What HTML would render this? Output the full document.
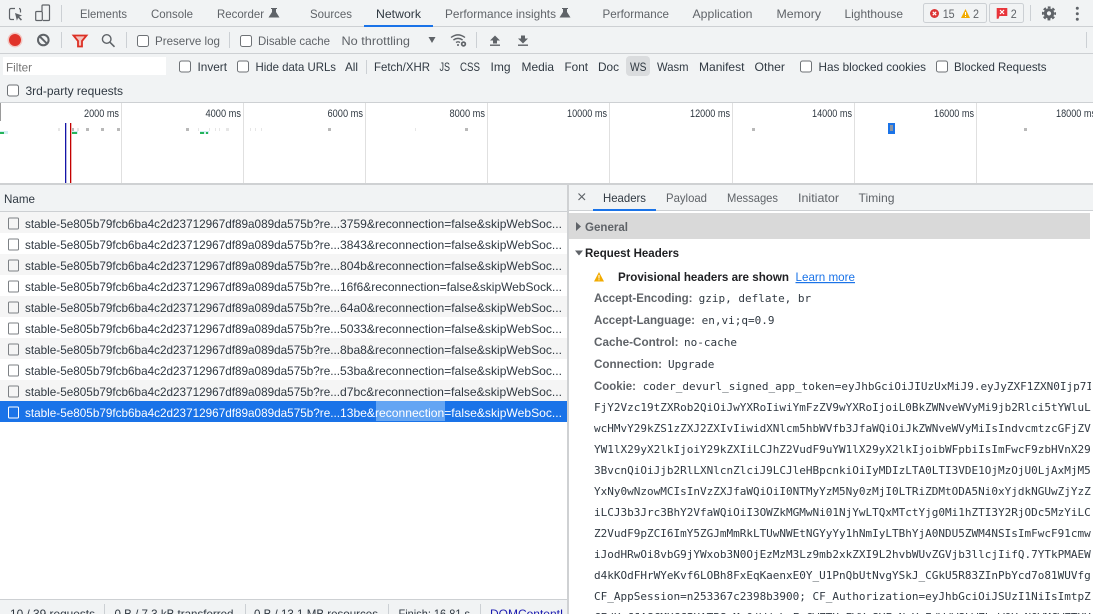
<!DOCTYPE html>
<html><head><meta charset="utf-8"><style>
html,body{margin:0;padding:0;background:#f1f3f4;width:1093px;height:614px;overflow:hidden}
svg{display:block;font-family:"Liberation Sans",sans-serif;font-size:12px}
.t{fill:#5f6368}.d{fill:#303942}.b{font-weight:bold}
.m{font-family:"DejaVu Sans Mono",monospace;font-size:11px;fill:#303942}
.l{font-size:11px;fill:#303942}
.cb{fill:#fff;stroke:#6e7276;stroke-width:1}
.sep{stroke:#ccd0d4;stroke-width:1}
.g{stroke:#e0e0e0;stroke-width:1}
.k{fill:#5f6368;font-weight:bold}
.r{fill:#303942}
.w{fill:#fff}
</style></head><body>
<svg width="1093" height="614" viewBox="0 0 1093 614" xmlns="http://www.w3.org/2000/svg">
<defs><clipPath id="cc"><rect x="569" y="240" width="522" height="374"/></clipPath><clipPath id="sc"><rect x="0" y="600" width="567" height="14"/></clipPath></defs>
<rect width="1093" height="614" fill="#f1f3f4"/>
<!-- main tab bar -->
<rect x="0" y="26" width="1093" height="1" fill="#cdd0d3"/>
<rect x="364" y="25" width="69" height="2" fill="#1a73e8"/>
<path d="M15 8.500h-4a1.500 1.500 0 0 0-1.500 1.500v8a1.500 1.500 0 0 0 1.500 1.500h3M20.500 12.500V10a1.500 1.500 0 0 0-1.500-1.500" fill="none" stroke="#5f6368" stroke-width="1.200"/>
<path d="M15 13l7 2.500-2.800 1.200 2.800 2.800-1.100 1.100-2.800-2.800-1.200 2.800z" fill="#5f6368"/>
<path d="M42 11V6a1 1 0 0 1 1-1h5.500a1 1 0 0 1 1 1v13.500a1 1 0 0 1-1 1H43" fill="none" stroke="#5f6368" stroke-width="1.200"/>
<rect x="35.700" y="11.500" width="6.600" height="9" rx="1" fill="#f1f3f4" stroke="#5f6368" stroke-width="1.200"/>
<line class="sep" x1="61.500" y1="5" x2="61.500" y2="22"/>
<text class="t" x="80" y="18" textLength="47" lengthAdjust="spacingAndGlyphs">Elements</text>
<text class="t" x="151" y="18" textLength="42" lengthAdjust="spacingAndGlyphs">Console</text>
<text class="t" x="217" y="18" textLength="47" lengthAdjust="spacingAndGlyphs">Recorder</text>
<path d="M271 8h6v1h-1v3l3.500 5.500h-11L272 12V9h-1z" fill="#5f6368"/>
<text class="t" x="310" y="18" textLength="42" lengthAdjust="spacingAndGlyphs">Sources</text>
<text class="d" x="376" y="18" textLength="45" lengthAdjust="spacingAndGlyphs">Network</text>
<text class="t" x="445" y="18" textLength="111" lengthAdjust="spacingAndGlyphs">Performance insights</text>
<path d="M562 8h6v1h-1v3l3.500 5.500h-11L563 12V9h-1z" fill="#5f6368"/>
<text class="t" x="602.500" y="18" textLength="66.500" lengthAdjust="spacingAndGlyphs">Performance</text>
<text class="t" x="692.500" y="18" textLength="60" lengthAdjust="spacingAndGlyphs">Application</text>
<text class="t" x="776.500" y="18" textLength="44.500" lengthAdjust="spacingAndGlyphs">Memory</text>
<text class="t" x="844.500" y="18" textLength="58.500" lengthAdjust="spacingAndGlyphs">Lighthouse</text>
<rect x="923.500" y="3.500" width="63" height="19" rx="2" fill="#f1f3f4" stroke="#ccd0d4"/>
<circle cx="934.500" cy="13.500" r="4.500" fill="#dc3535"/><path d="M932.800 11.800l3.400 3.400m0-3.400l-3.400 3.400" stroke="#fff" stroke-width="1.200"/>
<text class="t" x="942.700" y="18" textLength="12" lengthAdjust="spacingAndGlyphs">15</text>
<path d="M961 18l4.500-9 4.500 9z" fill="#f2ab00"/><rect x="965" y="12" width="1" height="3" fill="#fff"/><rect x="965" y="16" width="1" height="1" fill="#fff"/>
<text class="t" x="973" y="18" textLength="6" lengthAdjust="spacingAndGlyphs">2</text>
<rect x="989.500" y="3.500" width="34" height="19" rx="2" fill="#f1f3f4" stroke="#ccd0d4"/>
<path d="M996.700 8h10.600v8h-7.800l-1 2.700h-1.800z" fill="#e8353b"/><path d="M1000 10l4 4m0-4l-4 4" stroke="#fff" stroke-width="1.200"/>
<text class="t" x="1010.700" y="18" textLength="6" lengthAdjust="spacingAndGlyphs">2</text>
<line class="sep" x1="1030.500" y1="5" x2="1030.500" y2="21"/>
<circle cx="1049" cy="13.400" r="5.200" fill="#5f6368"/>
<circle cx="1049" cy="13.400" r="6.100" fill="none" stroke="#5f6368" stroke-width="1.900" stroke-dasharray="2.800 1.990" stroke-dashoffset="1.400"/>
<circle cx="1049" cy="13.400" r="2.100" fill="#f1f3f4"/>
<circle cx="1077.300" cy="8.300" r="1.500" fill="#5f6368"/><circle cx="1077.300" cy="13.800" r="1.500" fill="#5f6368"/><circle cx="1077.300" cy="19.300" r="1.500" fill="#5f6368"/>
<!-- toolbar -->
<rect x="0" y="53" width="1093" height="1" fill="#cdd0d3"/>
<circle cx="15" cy="40" r="7.500" fill="#f3c6c2"/><circle cx="15" cy="40" r="6" fill="#e0332a"/>
<circle cx="43.300" cy="40" r="5.300" fill="none" stroke="#5f6368" stroke-width="2"/><path d="M39.500 36.200l7.600 7.600" stroke="#5f6368" stroke-width="2"/>
<line class="sep" x1="61.500" y1="32" x2="61.500" y2="48"/>
<path d="M73.500 35.500h13l-4.500 5.500v5.500h-4V41z" fill="#f4c4bf" stroke="#dc3025" stroke-width="1.800"/>
<circle cx="106.700" cy="39" r="4.300" fill="none" stroke="#5f6368" stroke-width="1.400"/><path d="M110 42.300l4.500 4.500" stroke="#5f6368" stroke-width="1.600"/>
<line class="sep" x1="126.500" y1="32" x2="126.500" y2="48"/>
<rect class="cb" x="137.500" y="35.500" width="11" height="11" rx="2"/>
<text class="t" x="155" y="45" textLength="65" lengthAdjust="spacingAndGlyphs">Preserve log</text>
<line class="sep" x1="229.500" y1="32" x2="229.500" y2="48"/>
<rect class="cb" x="240.500" y="35.500" width="11" height="11" rx="2"/>
<text class="t" x="258" y="45" textLength="72" lengthAdjust="spacingAndGlyphs">Disable cache</text>
<text class="t" x="341.500" y="45" textLength="68.500" lengthAdjust="spacingAndGlyphs">No throttling</text>
<path d="M428.500 37h7l-3.500 6z" fill="#5f6368"/>
<path d="M451 37.500q7-5.300 14 0M453.400 40q4.600-3.200 9.200 0M456 42.500q2-1.300 4 0" fill="none" stroke="#5f6368" stroke-width="1.400"/>
<circle cx="458" cy="45" r="1" fill="#5f6368"/><circle cx="463.500" cy="44" r="2.700" fill="#5f6368"/><circle cx="463.500" cy="44" r="1" fill="#f1f3f4"/>
<line class="sep" x1="476.500" y1="32" x2="476.500" y2="48"/>
<path d="M495 35.500l5 5h-3v3h-4v-3h-3z" fill="#5f6368"/><rect x="490" y="44.500" width="10" height="1.400" fill="#5f6368"/>
<path d="M523 43.500l5-5h-3v-3h-4v3h-3z" fill="#5f6368"/><rect x="518" y="44.500" width="10" height="1.400" fill="#5f6368"/>
<line class="sep" x1="1086.500" y1="32" x2="1086.500" y2="48"/>
<!-- filter row -->
<rect x="3" y="57" width="163" height="18" fill="#fff"/>
<text x="6" y="71.500" fill="#757575" textLength="26" lengthAdjust="spacingAndGlyphs">Filter</text>
<rect class="cb" x="179.500" y="61" width="11" height="11" rx="2"/>
<text class="d" x="197.500" y="71" textLength="29.500" lengthAdjust="spacingAndGlyphs">Invert</text>
<rect class="cb" x="237.500" y="61" width="11" height="11" rx="2"/>
<text class="d" x="255.500" y="71" textLength="80.500" lengthAdjust="spacingAndGlyphs">Hide data URLs</text>
<text class="d" x="345" y="71" textLength="13" lengthAdjust="spacingAndGlyphs">All</text>
<line class="sep" x1="366.500" y1="60" x2="366.500" y2="74"/>
<text class="d" x="374" y="71" textLength="56" lengthAdjust="spacingAndGlyphs">Fetch/XHR</text>
<text class="d" x="439.500" y="71" textLength="10.500" lengthAdjust="spacingAndGlyphs">JS</text>
<text class="d" x="460" y="71" textLength="20" lengthAdjust="spacingAndGlyphs">CSS</text>
<text class="d" x="490.500" y="71" textLength="20" lengthAdjust="spacingAndGlyphs">Img</text>
<text class="d" x="521.500" y="71" textLength="32.500" lengthAdjust="spacingAndGlyphs">Media</text>
<text class="d" x="564.500" y="71" textLength="23.500" lengthAdjust="spacingAndGlyphs">Font</text>
<text class="d" x="598" y="71" textLength="21" lengthAdjust="spacingAndGlyphs">Doc</text>
<rect x="626" y="56" width="24" height="20" rx="4" fill="#dadcde"/>
<text class="d" x="630" y="71" textLength="16.500" lengthAdjust="spacingAndGlyphs">WS</text>
<text class="d" x="657" y="71" textLength="31.500" lengthAdjust="spacingAndGlyphs">Wasm</text>
<text class="d" x="699" y="71" textLength="45.500" lengthAdjust="spacingAndGlyphs">Manifest</text>
<text class="d" x="754.500" y="71" textLength="30.500" lengthAdjust="spacingAndGlyphs">Other</text>
<rect class="cb" x="800.500" y="61" width="11" height="11" rx="2"/>
<text class="d" x="818.500" y="71" textLength="107.500" lengthAdjust="spacingAndGlyphs">Has blocked cookies</text>
<rect class="cb" x="936.500" y="61" width="11" height="11" rx="2"/>
<text class="d" x="954" y="71" textLength="92.500" lengthAdjust="spacingAndGlyphs">Blocked Requests</text>
<rect class="cb" x="7.500" y="85" width="11" height="11" rx="2"/>
<text class="d" x="25.500" y="95" textLength="97.500" lengthAdjust="spacingAndGlyphs">3rd-party requests</text>
<!-- timeline -->
<rect x="0" y="102" width="1093" height="1" fill="#cdd0d3"/>
<rect x="0" y="103" width="1093" height="80" fill="#fff"/>
<rect x="0" y="183" width="1093" height="2" fill="#cfd1d3"/>
<rect x="0" y="103" width="1" height="18" fill="#9a9a9a"/>
<line class="g" x1="121.500" y1="103" x2="121.500" y2="183"/><line class="g" x1="243.500" y1="103" x2="243.500" y2="183"/><line class="g" x1="365.500" y1="103" x2="365.500" y2="183"/><line class="g" x1="487.500" y1="103" x2="487.500" y2="183"/><line class="g" x1="609.500" y1="103" x2="609.500" y2="183"/><line class="g" x1="732.500" y1="103" x2="732.500" y2="183"/><line class="g" x1="854.500" y1="103" x2="854.500" y2="183"/><line class="g" x1="976.500" y1="103" x2="976.500" y2="183"/>
<text class="l" x="84" y="117" textLength="35" lengthAdjust="spacingAndGlyphs">2000 ms</text>
<text class="l" x="205.500" y="117" textLength="35.500" lengthAdjust="spacingAndGlyphs">4000 ms</text>
<text class="l" x="327.500" y="117" textLength="35.500" lengthAdjust="spacingAndGlyphs">6000 ms</text>
<text class="l" x="449.500" y="117" textLength="35.500" lengthAdjust="spacingAndGlyphs">8000 ms</text>
<text class="l" x="567" y="117" textLength="40" lengthAdjust="spacingAndGlyphs">10000 ms</text>
<text class="l" x="690" y="117" textLength="40" lengthAdjust="spacingAndGlyphs">12000 ms</text>
<text class="l" x="812" y="117" textLength="40" lengthAdjust="spacingAndGlyphs">14000 ms</text>
<text class="l" x="934" y="117" textLength="40" lengthAdjust="spacingAndGlyphs">16000 ms</text>
<text class="l" x="1056" y="117" textLength="40" lengthAdjust="spacingAndGlyphs">18000 ms</text>
<rect x="65" y="123" width="1.300" height="60" fill="#1414a8"/><rect x="70" y="123" width="1.300" height="60" fill="#c40000"/>
<g fill="#b9b9b9"><rect x="86" y="128" width="3" height="3"/><rect x="101" y="128" width="3" height="3"/><rect x="117" y="128" width="3" height="3"/><rect x="186" y="128" width="3" height="3"/><rect x="328" y="128" width="3" height="3"/><rect x="465" y="128" width="3" height="3"/><rect x="752" y="128" width="3" height="3"/><rect x="1024" y="128" width="3" height="3"/><rect x="72" y="128" width="2" height="3"/></g>
<g fill="#e6e6e6"><rect x="58" y="128" width="2" height="3"/><rect x="77" y="128" width="2" height="3"/><rect x="198" y="128" width="1" height="3"/><rect x="209" y="128" width="1" height="3"/><rect x="215" y="128" width="1" height="3"/><rect x="219" y="128" width="1" height="3"/><rect x="226" y="128" width="3" height="3"/><rect x="250" y="128" width="1" height="3"/><rect x="255" y="128" width="1" height="3"/><rect x="261" y="128" width="1" height="3"/><rect x="415" y="128" width="1" height="3"/></g>
<rect x="0" y="131" width="8" height="3" fill="#d3eef3"/><rect x="0" y="132" width="4" height="2" fill="#25b45a"/>
<rect x="72" y="131" width="6" height="3" fill="#d3eef3"/><rect x="72" y="132" width="5" height="2" fill="#25b45a"/>
<rect x="200" y="131" width="9" height="3" fill="#d3eef3"/><rect x="200" y="132" width="4" height="2" fill="#25b45a"/><rect x="206" y="132" width="2" height="2" fill="#25b45a"/>
<rect x="888" y="123" width="7" height="11" fill="#1a73e8"/><rect x="890" y="125" width="3" height="6" fill="#8a94a3"/>
<!-- left list -->
<rect x="0" y="185" width="568" height="26" fill="#f1f3f4"/>
<rect x="0" y="211" width="568" height="1" fill="#cdd0d3"/>
<text class="d" x="4" y="203" textLength="31" lengthAdjust="spacingAndGlyphs">Name</text>
<rect x="0" y="212" width="568" height="388" fill="#fff"/>
<rect x="0" y="212" width="568" height="21" fill="#f5f5f5"/><rect x="0" y="254" width="568" height="21" fill="#f5f5f5"/><rect x="0" y="296" width="568" height="21" fill="#f5f5f5"/><rect x="0" y="338" width="568" height="21" fill="#f5f5f5"/><rect x="0" y="380" width="568" height="21" fill="#f5f5f5"/>
<rect x="0" y="401" width="568" height="21" fill="#1a73e8"/>
<rect x="376" y="401" width="69" height="20" fill="#64a5f3"/>
<g fill="none" stroke="#7d8185"><rect x="8.500" y="218" width="10" height="11" rx="1"/><rect x="8.500" y="239" width="10" height="11" rx="1"/><rect x="8.500" y="260" width="10" height="11" rx="1"/><rect x="8.500" y="281" width="10" height="11" rx="1"/><rect x="8.500" y="302" width="10" height="11" rx="1"/><rect x="8.500" y="323" width="10" height="11" rx="1"/><rect x="8.500" y="344" width="10" height="11" rx="1"/><rect x="8.500" y="365" width="10" height="11" rx="1"/><rect x="8.500" y="386" width="10" height="11" rx="1"/></g>
<rect x="8.500" y="407" width="10" height="11" rx="1" fill="none" stroke="#fff"/>
<g class="r">
<text class="r" x="25" y="228" textLength="315" lengthAdjust="spacingAndGlyphs">stable-5e805b79fcb6ba4c2d23712967df89a089da575b?re...</text><text class="r" x="340" y="228" textLength="222" lengthAdjust="spacingAndGlyphs">3759&amp;reconnection=false&amp;skipWebSoc...</text>
<text class="r" x="25" y="249" textLength="315" lengthAdjust="spacingAndGlyphs">stable-5e805b79fcb6ba4c2d23712967df89a089da575b?re...</text><text class="r" x="340" y="249" textLength="222" lengthAdjust="spacingAndGlyphs">3843&amp;reconnection=false&amp;skipWebSoc...</text>
<text class="r" x="25" y="270" textLength="315" lengthAdjust="spacingAndGlyphs">stable-5e805b79fcb6ba4c2d23712967df89a089da575b?re...</text><text class="r" x="340" y="270" textLength="222" lengthAdjust="spacingAndGlyphs">804b&amp;reconnection=false&amp;skipWebSoc...</text>
<text class="r" x="25" y="291" textLength="315" lengthAdjust="spacingAndGlyphs">stable-5e805b79fcb6ba4c2d23712967df89a089da575b?re...</text><text class="r" x="340" y="291" textLength="222" lengthAdjust="spacingAndGlyphs">16f6&amp;reconnection=false&amp;skipWebSock...</text>
<text class="r" x="25" y="312" textLength="315" lengthAdjust="spacingAndGlyphs">stable-5e805b79fcb6ba4c2d23712967df89a089da575b?re...</text><text class="r" x="340" y="312" textLength="222" lengthAdjust="spacingAndGlyphs">64a0&amp;reconnection=false&amp;skipWebSoc...</text>
<text class="r" x="25" y="333" textLength="315" lengthAdjust="spacingAndGlyphs">stable-5e805b79fcb6ba4c2d23712967df89a089da575b?re...</text><text class="r" x="340" y="333" textLength="222" lengthAdjust="spacingAndGlyphs">5033&amp;reconnection=false&amp;skipWebSoc...</text>
<text class="r" x="25" y="354" textLength="315" lengthAdjust="spacingAndGlyphs">stable-5e805b79fcb6ba4c2d23712967df89a089da575b?re...</text><text class="r" x="340" y="354" textLength="222" lengthAdjust="spacingAndGlyphs">8ba8&amp;reconnection=false&amp;skipWebSoc...</text>
<text class="r" x="25" y="375" textLength="315" lengthAdjust="spacingAndGlyphs">stable-5e805b79fcb6ba4c2d23712967df89a089da575b?re...</text><text class="r" x="340" y="375" textLength="222" lengthAdjust="spacingAndGlyphs">53ba&amp;reconnection=false&amp;skipWebSoc...</text>
<text class="r" x="25" y="396" textLength="315" lengthAdjust="spacingAndGlyphs">stable-5e805b79fcb6ba4c2d23712967df89a089da575b?re...</text><text class="r" x="340" y="396" textLength="222" lengthAdjust="spacingAndGlyphs">d7bc&amp;reconnection=false&amp;skipWebSoc...</text>
<text class="w" x="25" y="417" textLength="315" lengthAdjust="spacingAndGlyphs">stable-5e805b79fcb6ba4c2d23712967df89a089da575b?re...</text><text class="w" x="340" y="417" textLength="222" lengthAdjust="spacingAndGlyphs">13be&amp;reconnection=false&amp;skipWebSoc...</text>
</g>
<!-- status bar -->
<rect x="0" y="599" width="568" height="1" fill="#cdd0d3"/>
<rect x="0" y="600" width="568" height="14" fill="#f1f3f4"/>
<g clip-path="url(#sc)">
<text class="d" x="10" y="618" textLength="85" lengthAdjust="spacingAndGlyphs">10 / 39 requests</text>
<line class="sep" x1="104.500" y1="604" x2="104.500" y2="614"/>
<text class="d" x="114.500" y="618" textLength="119" lengthAdjust="spacingAndGlyphs">0 B / 7.3 kB transferred</text>
<line class="sep" x1="245.500" y1="604" x2="245.500" y2="614"/>
<text class="d" x="254" y="618" textLength="124" lengthAdjust="spacingAndGlyphs">0 B / 13.1 MB resources</text>
<line class="sep" x1="388.500" y1="604" x2="388.500" y2="614"/>
<text class="d" x="398.500" y="618" textLength="71.500" lengthAdjust="spacingAndGlyphs">Finish: 16.81 s</text>
<line class="sep" x1="480.500" y1="604" x2="480.500" y2="614"/>
<text x="490" y="618" fill="#1a1ab0" textLength="110" lengthAdjust="spacingAndGlyphs">DOMContentLoaded</text>
</g>
<!-- right panel -->
<rect x="569" y="185" width="524" height="429" fill="#fff"/>
<rect x="567" y="185" width="2" height="429" fill="#cfd1d3"/>
<rect x="569" y="185" width="524" height="25" fill="#f1f3f4"/>
<rect x="569" y="210" width="524" height="1" fill="#cdd0d3"/>
<rect x="593" y="209" width="63" height="2" fill="#1a73e8"/>
<path d="M578.500 193.500l6.500 6.500m0-6.500l-6.500 6.500" stroke="#5f6368" stroke-width="1.200"/>
<text class="d" x="603" y="202" textLength="43" lengthAdjust="spacingAndGlyphs">Headers</text>
<text class="t" x="666" y="202" textLength="41" lengthAdjust="spacingAndGlyphs">Payload</text>
<text class="t" x="727" y="202" textLength="51" lengthAdjust="spacingAndGlyphs">Messages</text>
<text class="t" x="798" y="202" textLength="41" lengthAdjust="spacingAndGlyphs">Initiator</text>
<text class="t" x="858.500" y="202" textLength="36" lengthAdjust="spacingAndGlyphs">Timing</text>
<rect x="569" y="213" width="521" height="26" fill="#d9d9d9"/>
<path d="M576 222v9l5-4.500z" fill="#5f6368"/>
<text class="k" x="585" y="231" textLength="43" lengthAdjust="spacingAndGlyphs">General</text>
<path d="M575 250.500h8l-4 5z" fill="#5f6368"/>
<text class="b" x="585" y="257" fill="#202124" textLength="94" lengthAdjust="spacingAndGlyphs">Request Headers</text>
<path d="M594 281.500l5-9.500 5 9.500z" fill="#f2ab00"/><rect x="598.500" y="275" width="1" height="3.500" fill="#fff"/><rect x="598.500" y="279.300" width="1" height="1" fill="#fff"/>
<text class="b" x="618" y="281" fill="#202124" textLength="171" lengthAdjust="spacingAndGlyphs">Provisional headers are shown</text>
<text x="795.500" y="281" fill="#1a73e8" text-decoration="underline" textLength="59.500" lengthAdjust="spacingAndGlyphs">Learn more</text>
<text class="k" x="594" y="302" textLength="98.500" lengthAdjust="spacingAndGlyphs">Accept-Encoding:</text><text class="m" x="698.600" y="302">gzip, deflate, br</text>
<text class="k" x="594" y="324" textLength="101" lengthAdjust="spacingAndGlyphs">Accept-Language:</text><text class="m" x="701.600" y="324">en,vi;q=0.9</text>
<text class="k" x="594" y="346" textLength="84.500" lengthAdjust="spacingAndGlyphs">Cache-Control:</text><text class="m" x="684" y="346">no-cache</text>
<text class="k" x="594" y="368" textLength="68" lengthAdjust="spacingAndGlyphs">Connection:</text><text class="m" x="668" y="368">Upgrade</text>
<text class="k" x="594" y="390" textLength="42" lengthAdjust="spacingAndGlyphs">Cookie:</text>
<g clip-path="url(#cc)">
<text class="m" x="642.700" y="390">coder_devurl_signed_app_token=eyJhbGciOiJIUzUxMiJ9.eyJyZXF1ZXN0Ijp7ImFj</text>
<text class="m" x="594" y="411">FjY2Vzc19tZXRob2QiOiJwYXRoIiwiYmFzZV9wYXRoIjoiL0BkZWNveWVyMi9jb2Rlci5tYWluL2Fw</text>
<text class="m" x="594" y="432">wcHMvY29kZS1zZXJ2ZXIvIiwidXNlcm5hbWVfb3JfaWQiOiJkZWNveWVyMiIsIndvcmtzcGFjZV9u</text>
<text class="m" x="594" y="453">YW1lX29yX2lkIjoiY29kZXIiLCJhZ2VudF9uYW1lX29yX2lkIjoibWFpbiIsImFwcF9zbHVnX29yX</text>
<text class="m" x="594" y="474">3BvcnQiOiJjb2RlLXNlcnZlciJ9LCJleHBpcnkiOiIyMDIzLTA0LTI3VDE1OjMzOjU0LjAxMjM5NT</text>
<text class="m" x="594" y="495">YxNy0wNzowMCIsInVzZXJfaWQiOiI0NTMyYzM5Ny0zMjI0LTRiZDMtODA5Ni0xYjdkNGUwZjYzZWI</text>
<text class="m" x="594" y="516">iLCJ3b3Jrc3BhY2VfaWQiOiI3OWZkMGMwNi01NjYwLTQxMTctYjg0Mi1hZTI3Y2RjODc5MzYiLCJh</text>
<text class="m" x="594" y="537">Z2VudF9pZCI6ImY5ZGJmMmRkLTUwNWEtNGYyYy1hNmIyLTBhYjA0NDU5ZWM4NSIsImFwcF91cmwiOi</text>
<text class="m" x="594" y="558">iJodHRwOi8vbG9jYWxob3N0OjEzMzM3Lz9mb2xkZXI9L2hvbWUvZGVjb3llcjIifQ.7YTkPMAEWxy</text>
<text class="m" x="594" y="579">d4kKOdFHrWYeKvf6LOBh8FxEqKaenxE0Y_U1PnQbUtNvgYSkJ_CGkU5R83ZInPbYcd7o81WUVfgAb</text>
<text class="m" x="594" y="600">CF_AppSession=n253367c2398b3900; CF_Authorization=eyJhbGciOiJSUzI1NiIsImtpZCI6</text>
<text class="m" x="594" y="621">CEdXyCJASCMXCCIXATBS_MuOjWdsLeFyCWZTHyEWYuSYFyNyYwEdWdWSLWZLyWOYyNOWMCWZTHYEA</text>
</g>
</svg>
</body></html>
